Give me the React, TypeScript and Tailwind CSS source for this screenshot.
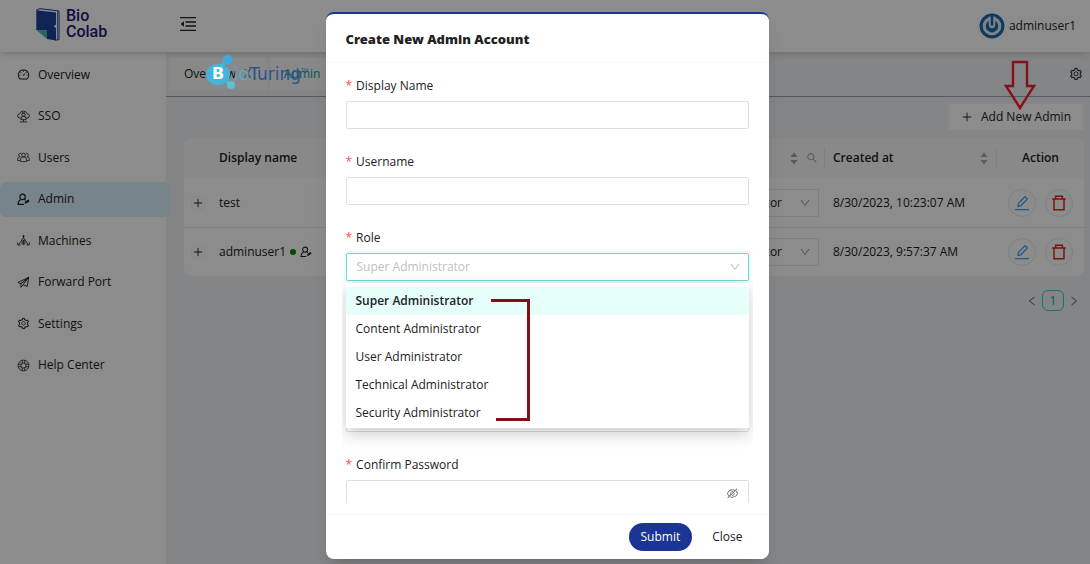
import React, { useState } from "react";
import {
  AiOutlineDashboard,
  AiOutlineDown,
  AiOutlineEyeInvisible,
  AiOutlineLeft,
  AiOutlinePlus,
  AiOutlineRight,
  AiOutlineSearch,
  AiOutlineSetting,
} from "react-icons/ai";

type IconProps = { className?: string };

function MenuFoldIcon({ className }: IconProps) {
  return (
    <svg viewBox="0 0 16 16" className={className} fill="none" stroke="currentColor" strokeWidth="1.4" aria-hidden="true">
      <path d="M0 1.6h16M5.5 6h10.5M5.5 10h10.5M0 14.4h16" />
      <path d="M4 5.2v5.6L.6 8z" fill="currentColor" stroke="none" />
    </svg>
  );
}

function SsoIcon({ className }: IconProps) {
  return (
    <svg viewBox="0 0 14 14" className={className} fill="none" stroke="currentColor" strokeWidth="0.9" aria-hidden="true">
      <path d="M4 8.6H2.8A2.2 2.2 0 0 1 2.9 4.2 4.2 4.2 0 0 1 11 4.2a2.2 2.2 0 0 1 .2 4.4H10" />
      <circle cx="7" cy="5" r="1.8" />
      <path d="M4.2 10.4V9.6A2.8 2.8 0 0 1 7 6.8a2.8 2.8 0 0 1 2.8 2.8v.8zM5.4 3.2h3.2M7 10.4v2M3 12.8h8" />
    </svg>
  );
}

function UsersIcon({ className }: IconProps) {
  return (
    <svg viewBox="0 0 14 14" className={className} fill="none" stroke="currentColor" strokeWidth="0.8" aria-hidden="true">
      <circle cx="7" cy="4.4" r="2" />
      <path d="M3.6 11.4V9.6a3.2 3.2 0 0 1 6.8 0v1.8zM4.8 2.8A1.8 1.8 0 1 0 3.4 6M9.2 2.8A1.8 1.8 0 1 1 10.6 6M3.4 6.2A2.8 2.8 0 0 0 .6 9v1.2h3M10.6 6.2A2.8 2.8 0 0 1 13.4 9v1.2h-3" />
    </svg>
  );
}

function AdminIcon({ className }: IconProps) {
  return (
    <svg viewBox="0 0 14 14" className={className} fill="none" stroke="currentColor" strokeWidth="1.3" aria-hidden="true">
      <circle cx="6" cy="4.2" r="2.9" />
      <path d="M7.4 12.2H1.2c0-2.6 1.2-4.4 3-5.2M7.8 6.8l1.4 1.1" />
      <path d="m8 11.6 1-2.6 3.2-2 1.4 1.8-3.2 2.2z" fill="currentColor" stroke="none" />
    </svg>
  );
}

function MachinesIcon({ className }: IconProps) {
  return (
    <svg viewBox="0 0 14 14" className={className} fill="none" stroke="currentColor" strokeWidth="0.9" aria-hidden="true">
      <path d="M7 .8v4M5.6 2.4h2.8M5.5 5.4 7 4.6l1.5.8v5.2L7 11.4l-1.5-.8zM7 6.4v4.8M5.4 6.4 2 11.4M8.6 6.4l3.4 5M.8 9v2.8h3M13.2 9v2.8h-3" />
    </svg>
  );
}

function ForwardIcon({ className }: IconProps) {
  return (
    <svg viewBox="0 0 14 14" className={className} fill="none" stroke="currentColor" strokeWidth="1" strokeLinejoin="round" aria-hidden="true">
      <path d="M12.6 1.4 1 7l3.2 1.4zM12.6 1.4 11 11.2 6.6 9.4zM12.6 1.4 4.2 8.4v3.8l2.4-2.8" />
    </svg>
  );
}

function HelpIcon({ className }: IconProps) {
  return (
    <svg viewBox="0 0 14 14" className={className} fill="none" stroke="currentColor" strokeWidth="0.9" aria-hidden="true">
      <circle cx="7" cy="7" r="5.8" />
      <circle cx="7" cy="7" r="2.8" />
      <path d="M5.6 1.4v3.2M8.4 1.4v3.2M5.6 9.4v3.2M8.4 9.4v3.2M1.4 5.6h3.2M1.4 8.4h3.2M9.4 5.6h3.2M9.4 8.4h3.2" />
    </svg>
  );
}

function TrashIcon({ className }: IconProps) {
  return (
    <svg viewBox="0 0 16 16" className={className} fill="none" stroke="currentColor" strokeWidth="1.5" aria-hidden="true">
      <path d="M1.2 4h13.6M3 4v10.8h10V4M4.6 4V1.2h6.8V4" />
    </svg>
  );
}

function PencilIcon({ className }: IconProps) {
  return (
    <svg viewBox="0 0 16 16" className={className} fill="none" stroke="currentColor" strokeWidth="1.3" aria-hidden="true">
      <path d="M1 14.6h14M4 11.4l.5-3L11 1.7 13.4 4 6.8 10.8z" />
    </svg>
  );
}

function ColabLogo() {
  return (
    <a href="#home" className="flex items-center gap-1.5 text-[#1d1a75]" aria-label="Bio Colab">
      <svg viewBox="0 0 24 33" className="h-[33px] w-6" aria-hidden="true">
        <path d="M.5 2 4 .6 23 3v28.6l-3.6.6" fill="none" stroke="#1f3f95" strokeWidth="1" />
        <path d="M.3 2.2 20 4.6v12l-2.2 1.6L20 20v12.4L11 31V22.6L.3 22z" fill="#1c429c" />
        <path d="M.3 22 11 22.6V31z" fill="#4bb8ad" />
        <path d="M21.6 3.6v28" stroke="#1f3f95" strokeWidth=".8" />
      </svg>
      <span className="flex flex-col font-[Roboto,sans-serif] text-[16px] leading-4 font-medium">
        <span>Bio</span>
        <span>Colab</span>
      </span>
    </a>
  );
}

function BioTuringMark() {
  return (
    <div className="pointer-events-none absolute top-[54px] left-[204px] z-20 flex items-center font-['DejaVu_Sans',sans-serif]">
      <div className="relative">
        <svg viewBox="0 0 34 36" className="h-9 w-[34px]" aria-hidden="true">
          <path d="M18 12l5-8M20 24l6 7" stroke="#45b4dc" strokeWidth="3" />
          <circle cx="23.5" cy="6" r="5" fill="#3fa9dc" />
          <circle cx="27" cy="31" r="4" fill="#5bc0cf" />
          <ellipse cx="14" cy="20.5" rx="12" ry="10.5" fill="#45b4dc" />
        </svg>
        <span className="absolute inset-y-0 left-0 flex w-7 items-center justify-center pt-1 text-[16px] font-bold text-white">B</span>
      </div>
      <span className="-ml-1 pt-1 text-[17px] text-[#55abc9]">
        io<span className="text-[#2a548f]">Turing</span>
      </span>
      <span className="pb-1 text-[5px] text-[#2a548f]">TM</span>
    </div>
  );
}

const navItems = [
  { label: "Overview", Icon: AiOutlineDashboard },
  { label: "SSO", Icon: SsoIcon },
  { label: "Users", Icon: UsersIcon },
  { label: "Admin", Icon: AdminIcon },
  { label: "Machines", Icon: MachinesIcon },
  { label: "Forward Port", Icon: ForwardIcon },
  { label: "Settings", Icon: AiOutlineSetting },
  { label: "Help Center", Icon: HelpIcon },
];

function Sorter() {
  return (
    <svg viewBox="0 0 8 13" className="h-[13px] w-2 shrink-0 text-[#a5a5a5]" fill="currentColor" aria-hidden="true">
      <path d="M4 .5 7.6 5H.4zM4 12.5 7.6 8H.4z" />
    </svg>
  );
}

const rows = [
  { name: "test", online: false, role: "Super Administrator", created: "8/30/2023, 10:23:07 AM" },
  { name: "adminuser1", online: true, role: "Super Administrator", created: "8/30/2023, 9:57:37 AM" },
];

function AdminTable() {
  return (
    <table className="w-full table-fixed border-separate border-spacing-0 overflow-hidden rounded-lg bg-white">
      <colgroup>
        <col className="w-[25px]" />
        <col />
        <col className="w-[236px]" />
        <col className="w-[172px]" />
        <col className="w-[87px]" />
      </colgroup>
      <thead>
        <tr className="h-10 bg-[#fafafa] text-left">
          <th aria-label="Expand" />
          <th className="pl-2.5 font-semibold">Display name</th>
          <th>
            <span className="flex h-5 items-center justify-end gap-2 border-r border-gray-200 pr-1.5">
              <Sorter />
              <AiOutlineSearch className="size-3 text-[#999]" />
            </span>
          </th>
          <th className="pl-2 font-semibold">
            <span className="flex h-5 items-center justify-between border-r border-gray-200 pr-2">
              Created at
              <Sorter />
            </span>
          </th>
          <th className="text-center font-semibold">Action</th>
        </tr>
      </thead>
      <tbody className="[&>tr+tr>td]:border-t [&>tr+tr>td]:border-gray-200">
        {rows.map((row) => (
          <tr key={row.name} className="h-[49px]">
            <td>
              <button aria-label={`Expand ${row.name}`} className="ml-[7px] flex size-[14px] items-center justify-center rounded border border-gray-100">
                <AiOutlinePlus className="size-3 shrink-0" />
              </button>
            </td>
            <td className="pl-2.5">
              <span className="flex items-center gap-1">
                {row.name}
                {row.online && (
                  <>
                    <span className="size-1.5 rounded-full bg-[#008a00]" />
                    <AdminIcon className="size-3" />
                  </>
                )}
              </span>
            </td>
            <td>
              <div className="relative mr-1.5">
                <select
                  aria-label={`Role of ${row.name}`}
                  defaultValue={row.role}
                  className="block h-7 w-full appearance-none border border-gray-200 bg-white pr-9 text-right"
                >
                  <option>{row.role}</option>
                </select>
                <AiOutlineDown className="absolute top-2 right-2 size-3 text-gray-400" />
              </div>
            </td>
            <td className="pl-2">{row.created}</td>
            <td>
              <div className="flex justify-center gap-[9px]">
                <button aria-label={`Edit ${row.name}`} className="flex size-7 items-center justify-center rounded-full border border-gray-200 text-[#4ba3f5]">
                  <PencilIcon className="size-4" />
                </button>
                <button aria-label={`Delete ${row.name}`} className="flex size-7 items-center justify-center rounded-full border border-gray-200 text-[#e0241c]">
                  <TrashIcon className="size-4" />
                </button>
              </div>
            </td>
          </tr>
        ))}
      </tbody>
    </table>
  );
}

function Label({ htmlFor, children }: { htmlFor: string; children: React.ReactNode }) {
  return (
    <label htmlFor={htmlFor} className="mb-1.5 flex h-[18px] items-center gap-1">
      <span className="text-[#ff4d4f]">*</span>
      {children}
    </label>
  );
}

const roles = ["Super Administrator", "Content Administrator", "User Administrator", "Technical Administrator", "Security Administrator"];
const fieldClass = "block h-7 w-full rounded-xs border border-[#dfdfdf] bg-white px-2.5 outline-none";

function CreateAdminDialog() {
  const [role, setRole] = useState(roles[0]);
  return (
    <div
      role="dialog"
      aria-modal="true"
      aria-labelledby="dialog-title"
      className="flex w-full max-w-[443px] flex-col overflow-hidden rounded-lg border-t-2 border-[#1a3594] bg-white shadow-xl"
    >
      <header className="flex h-[49px] shrink-0 items-center border-b border-gray-100 px-5 pt-0.5">
        <h2 id="dialog-title" className="font-['Noto_Sans',sans-serif] text-[13px] font-black">Create New Admin Account</h2>
      </header>
      <div className="px-5 pb-[11px]">
        <div className="-mx-1 h-[440px] overflow-hidden px-1 pt-3.5">
          <div className="mb-6">
            <Label htmlFor="display-name">Display Name</Label>
            <input id="display-name" className={fieldClass} />
          </div>
          <div className="mb-6">
            <Label htmlFor="username">Username</Label>
            <input id="username" className={fieldClass} />
          </div>
          <div className="relative mb-12">
            <Label htmlFor="role">Role</Label>
            <select
              id="role"
              value={role}
              onChange={(e) => setRole(e.target.value)}
              className="block h-7 w-full appearance-none rounded-xs border border-[#76d5ce] bg-white px-2.5 text-[#bfbfbf] shadow-[0_0_0_2px_#e6fffb] outline-none"
            >
              {roles.map((r) => (
                <option key={r}>{r}</option>
              ))}
            </select>
            <AiOutlineDown className="absolute top-8 right-2 size-3 text-[#bfbfbf]" />
            <ul
              role="listbox"
              aria-label="Role options"
              className="absolute top-[54px] right-0 left-0 z-10 bg-white pt-1 pb-px shadow-[0_6px_16px_rgba(0,0,0,0.2)]"
            >
              {roles.map((r) => (
                <li
                  key={r}
                  role="option"
                  aria-selected={r === role}
                  onClick={() => setRole(r)}
                  className="flex h-7 items-center rounded-xs px-2.5 aria-selected:bg-[#e6fffb] aria-selected:font-semibold"
                >
                  {r}
                </li>
              ))}
            </ul>
          </div>
          <div className="mb-[47px]">
            <input type="email" aria-label="Email" className={fieldClass} />
          </div>
          <div className="mb-6">
            <input type="password" aria-label="Password" className={fieldClass} />
          </div>
          <div className="relative">
            <Label htmlFor="confirm-password">Confirm Password</Label>
            <input id="confirm-password" type="password" className={fieldClass} />
            <AiOutlineEyeInvisible className="absolute top-[31px] right-2.5 size-[13px] text-gray-500" />
          </div>
        </div>
      </div>
      <footer className="flex h-[45px] shrink-0 items-center justify-end gap-2 border-t border-gray-100 px-3.5">
        <button className="h-7 rounded-full bg-[#1a3594] px-3 text-white">Submit</button>
        <button className="h-7 rounded-full px-3">Close</button>
      </footer>
    </div>
  );
}

export default function App() {
  return (
    <div className="relative flex min-h-screen flex-col overflow-hidden bg-[#f0f2f5] font-['Open_Sans',sans-serif] text-[12px] leading-[18px] text-[#222]">
      <header className="relative z-10 flex h-[52px] items-center bg-white pr-3.5 pl-9 shadow-md">
        <div className="flex items-center gap-[73px] pb-1">
          <ColabLogo />
          <button aria-label="Collapse menu">
            <MenuFoldIcon className="size-4" />
          </button>
        </div>
        <button className="ml-auto flex items-center gap-1 font-medium">
          <svg viewBox="0 0 26 26" className="size-[26px]" aria-hidden="true">
            <circle cx="13" cy="13" r="12.5" fill="#1e6cae" />
            <circle cx="13" cy="13" r="9.3" fill="#e4eef6" />
            <circle cx="13" cy="13.2" r="6.2" fill="#1e6cae" />
            <path d="M9.8 3.5h6.4V12a3.2 3.2 0 0 1-6.4 0z" fill="#e4eef6" />
            <path d="M13 3v9.500" stroke="#1e6cae" strokeWidth="2.6" />
          </svg>
          adminuser1
        </button>
      </header>

      <div className="flex flex-1">
        <div className="w-[166px] shrink-0 bg-white pt-[5px]">
          <nav aria-label="Main" className="flex h-[326px] flex-col justify-between">
            {navItems.map(({ label, Icon }) => (
              <a
                key={label}
                href={`#${label.toLowerCase().replace(" ", "-")}`}
                aria-current={label === "Admin" ? "page" : undefined}
                className="relative flex h-[35px] items-center gap-2 rounded-md pl-[17px] aria-[current=page]:-mr-1 aria-[current=page]:bg-[#d9f0fc]"
              >
                <Icon className="size-[13px]" />
                {label}
              </a>
            ))}
          </nav>
        </div>

        <main className="min-w-0 flex-1">
          <div className="flex h-[45px] items-center gap-[3px] border-b border-gray-400 px-1">
            <div className="flex h-8 items-center gap-2 bg-[#f9fafb] pr-4 pl-3.5">
              Overview
              <span aria-hidden="true" className="text-gray-500">X</span>
            </div>
            <div className="flex h-8 items-center bg-[#f9fafb] px-3.5 text-[#139c94]">Admin</div>
            <button aria-label="Page settings" className="ml-auto pr-[3px]">
              <AiOutlineSetting className="size-[14px]" />
            </button>
          </div>
          <div className="pr-1.5 pl-[18px]">
            <div className="flex justify-end pt-1.5 pb-[7px]">
              <button className="flex h-7 items-center gap-2 border border-gray-100 bg-white px-3">
                <AiOutlinePlus className="size-3" />
                Add New Admin
              </button>
            </div>
            <AdminTable />
            <div className="mt-3.5 flex items-center justify-end gap-1 pr-1 text-gray-500">
              <button aria-label="Previous page">
                <AiOutlineLeft className="size-3" />
              </button>
              <button className="h-[21px] w-[22px] rounded-md border border-[#36cfc9] text-[#13a8a8]">1</button>
              <button aria-label="Next page">
                <AiOutlineRight className="size-3" />
              </button>
            </div>
          </div>
        </main>
      </div>

      <div className="absolute inset-0 z-10 flex items-start justify-center bg-black/45 pt-3 pl-1">
        <CreateAdminDialog />
      </div>

      <BioTuringMark />
      <svg
        viewBox="0 0 32 50"
        className="pointer-events-none absolute top-[60px] right-[54px] z-20 h-[50px] w-8"
        fill="none"
        stroke="#85101a"
        strokeWidth="2.4"
        aria-hidden="true"
      >
        <path d="M9 2h14v24h7L16 48 2 26h7z" />
      </svg>
      <svg
        viewBox="0 0 40 124"
        className="pointer-events-none absolute top-[298px] left-[calc(50%-55px)] z-20 h-[124px] w-10"
        fill="none"
        stroke="#80101a"
        strokeWidth="3"
        aria-hidden="true"
      >
        <path d="M1 2.5h37.5v119H6" />
      </svg>
    </div>
  );
}
